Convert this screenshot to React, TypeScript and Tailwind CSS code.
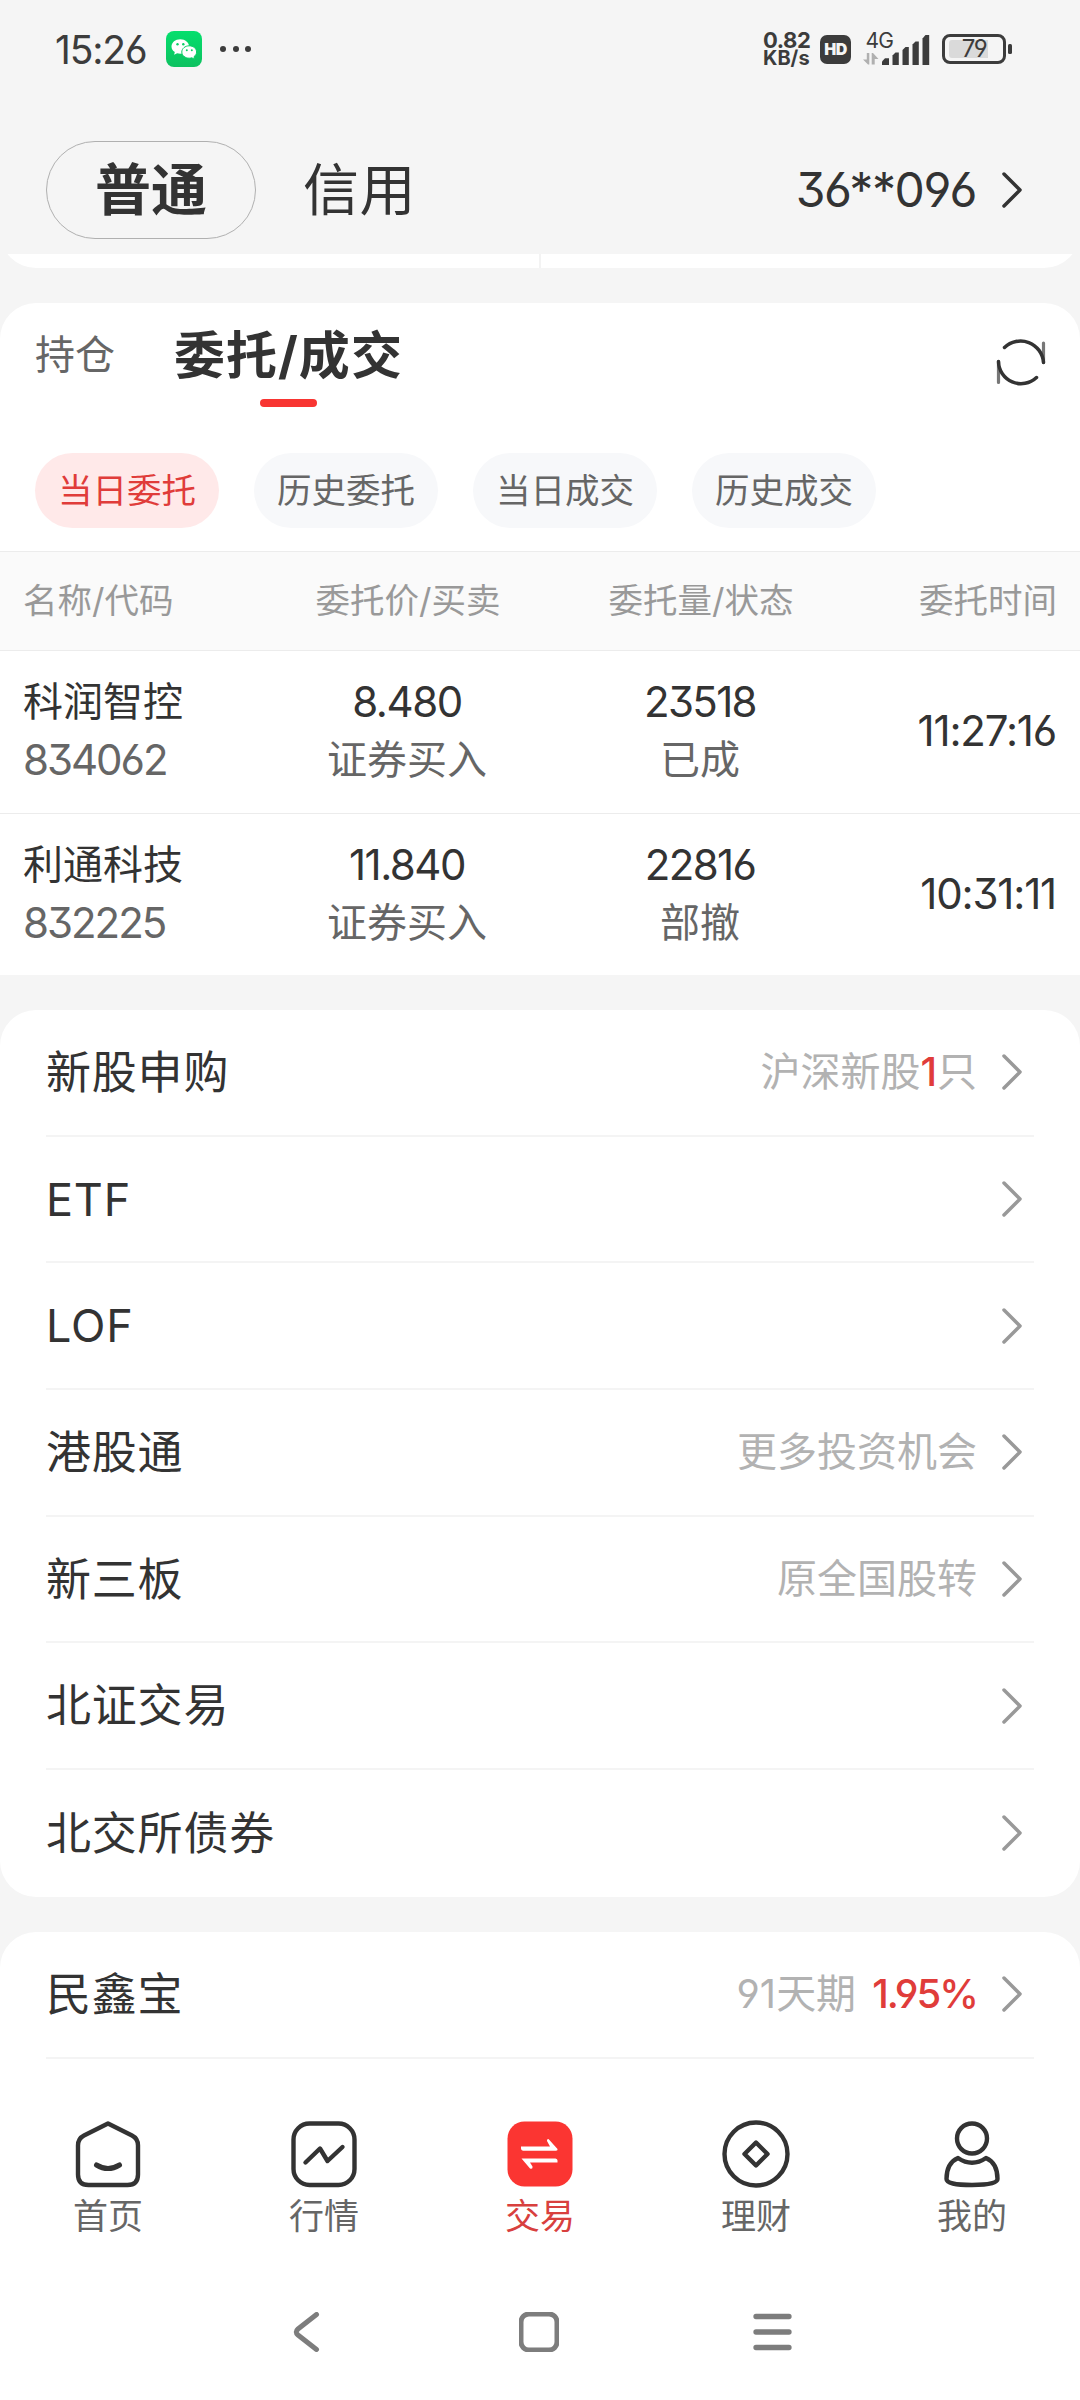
import type { ReactNode } from "react";

const FILTERS = ["当日委托", "历史委托", "当日成交", "历史成交"];

const ORDERS = [
  { name: "科润智控", code: "834062", price: "8.480", side: "证券买入", qty: "23518", status: "已成", time: "11:27:16" },
  { name: "利通科技", code: "832225", price: "11.840", side: "证券买入", qty: "22816", status: "部撤", time: "10:31:11" },
];

const ENTRIES: { label: string; note?: ReactNode }[] = [
  {
    label: "新股申购",
    note: (
      <>
        沪深新股<span className="font-medium text-[#e03c3a]">1</span>只
      </>
    ),
  },
  { label: "ETF" },
  { label: "LOF" },
  { label: "港股通", note: "更多投资机会" },
  { label: "新三板", note: "原全国股转" },
  { label: "北证交易" },
  { label: "北交所债券" },
];

export default function App() {
  return (
    <div className="flex h-[2400px] w-[1080px] flex-col overflow-hidden bg-[#f5f5f5] font-['Inter','Noto_Sans_CJK_SC',sans-serif] text-[#333] [font-feature-settings:'cv03','cv04','cv09']">
      <StatusBar />
      <AccountHeader />
      <PreviousCard />
      <Orders />

      <section className="mt-[35px] rounded-[36px] bg-white">
        {ENTRIES.map((e, i) => (
          <EntryRow key={e.label} label={e.label} last={i === ENTRIES.length - 1}>
            {e.note}
          </EntryRow>
        ))}
      </section>

      <section className="mt-[35px] flex-1 rounded-t-[36px] bg-white">
        <EntryRow label="民鑫宝">
          91天期<span className="ml-4 font-medium tracking-[-0.05em] text-[#e03c3a]">1.95%</span>
        </EntryRow>
      </section>

      <TabBar />
      <SystemNav />
    </div>
  );
}

function StatusBar() {
  return (
    <div className="flex h-[98px] shrink-0 items-center justify-between pr-[68px] pl-[55px] text-[#3c3c3c]">
      <div className="flex items-center">
        <span className="w-[111px] text-[39px] leading-none tracking-[-0.03em]">15:26</span>
        <svg viewBox="0 0 36 36" className="h-9 w-9">
          <defs>
            <linearGradient id="wx" x1="0" y1="0" x2="0" y2="1">
              <stop offset="0" stopColor="#05df6d" />
              <stop offset="1" stopColor="#0dc160" />
            </linearGradient>
          </defs>
          <rect width="36" height="36" rx="8" fill="url(#wx)" />
          <path d="M14.3 8.2c-5 0-8.8 3.2-8.8 7.3 0 2.3 1.3 4.3 3.3 5.6l-.7 2.6 3-1.5c1 .3 2.1.5 3.2.5 5 0 8.8-3.2 8.8-7.2s-3.9-7.3-8.8-7.3z" fill="#fff" />
          <path d="M23.2 14.8c4.1 0 7.4 2.8 7.4 6.2 0 1.9-1 3.5-2.6 4.7l.5 2.5-2.7-1.4c-.8.2-1.7.4-2.6.4-4.1 0-7.4-2.8-7.4-6.2s3.3-6.200 7.4-6.200z" fill="#fff" stroke="#08cf66" strokeWidth="1" />
          <g fill="#08cf66">
            <circle cx="11.5" cy="13.2" r="1.2" />
            <circle cx="17.3" cy="13.2" r="1.2" />
            <circle cx="20.8" cy="19.3" r="1" />
            <circle cx="25.8" cy="19.3" r="1" />
          </g>
        </svg>
        <div className="ml-[18px] flex gap-[6.5px]">
          <i className="size-1.5 rounded-full bg-current" />
          <i className="size-1.5 rounded-full bg-current" />
          <i className="size-1.5 rounded-full bg-current" />
        </div>
      </div>

      <div className="flex items-center">
        <div className="w-[57px] text-[22px] leading-[18px] font-bold">
          <div className="tracking-[-0.02em]">0.82</div>
          <div className="text-[20px]">KB/s</div>
        </div>
        <div className="flex h-[29px] w-[31px] items-center justify-center rounded-[7px] bg-[#3c3c3c] text-[16px] leading-none font-black tracking-[-0.03em] text-[#f5f5f5]">
          HD
        </div>
        <svg viewBox="0 0 68 34" className="ml-3 h-[34px] w-[68px] overflow-visible">
          <text x="2.5" y="15.5" fontSize="21" letterSpacing="-0.8" fill="#3c3c3c">
            4G
          </text>
          <path d="M0 27.500h3.800V21H6.300v11.500H5zM8.700 32.500V21H10l5.500 6h-3.800v5.500z" fill="#b0b0b0" />
          <g fill="#3c3c3c">
            <path d="M19 33v-3.500l3-3.200h4V33z" />
            <path d="M29.500 33v-9.500l3-3h3.300V33z" />
            <path d="M39.500 33V18l3-3h3.300v18z" />
            <path d="M49.500 33V12.500l3-3h3.300V33z" />
            <path d="M59.500 33V6.500l3-3.500h3.700v30z" />
          </g>
        </svg>
        <div className="ml-[11px] flex h-[30px] w-[64px] items-center rounded-[8px] border-[3px] border-current pl-1">
          <div className="flex h-[18px] w-[39px] items-center justify-end rounded-l-[3px] bg-[#dadada] pr-0.5 text-[24px] leading-none tracking-[-0.07em]">
            79
          </div>
        </div>
        <i className="ml-0.5 h-2.5 w-1 rounded-[1.5px] bg-current" />
      </div>
    </div>
  );
}

function AccountHeader() {
  return (
    <div className="flex h-[156px] shrink-0 items-center pt-[28px] pr-[58px] pl-[46px]">
      <div className="mt-[-1px] flex h-[98px] w-[210px] items-center justify-center rounded-full border border-[#b0b0b0] text-[56px] leading-none font-bold">
        普通
      </div>
      <span className="ml-[47px] text-[56px] leading-none tracking-[0.01em]">信用</span>
      <span className="ml-auto text-[48px] leading-none tracking-[-0.028em]">36**096</span>
      <Chevron className="ml-[26px] text-[#333]" />
    </div>
  );
}

// Only the bottom edge of the scrolled-away card is still visible.
function PreviousCard() {
  return (
    <div className="flex h-3.5 shrink-0 items-end overflow-hidden">
      <div className="flex h-20 w-full shrink-0 justify-center rounded-b-[36px] bg-white">
        <i className="w-0.5 bg-[#f3f3f3]" />
      </div>
    </div>
  );
}

function Orders() {
  return (
    <section className="mt-[35px] rounded-t-[36px] bg-white">
      <div className="flex h-[150px] items-start pr-[34px] pl-[35px]">
        <span className="mt-[31px] text-[40px] leading-[42px] text-[#666]">持仓</span>
        <div className="ml-[59px] flex flex-col items-center">
          <span className="mt-[23px] text-[51px] leading-[60px] font-bold tracking-[0.02em]">委托/成交</span>
          <i className="mt-[13px] h-2 w-[57px] rounded-full bg-[#f83532]" />
        </div>
        <svg viewBox="0 0 50 50" className="mt-[34px] ml-auto h-[50px] w-[50px]" fill="none" strokeLinecap="round">
          <path d="M47.500 6v19.500M2.500 24.500v21" stroke="#777" strokeWidth="3.200" />
          <path d="M8.500 10.500A23 23 0 0 1 47.500 25.500M40.500 40.500A22.500 22.500 0 0 1 2.500 24.500" stroke="#333" strokeWidth="3.500" />
        </svg>
      </div>

      <div className="flex h-[98px] gap-[35px] pl-[35px]">
        {FILTERS.map((f, i) => (
          <span
            key={f}
            className={`flex h-[75px] w-[184px] items-center justify-center rounded-full pt-px text-[34.5px] leading-none ${
              i === 0 ? "bg-[#ffe9e9] text-[#e03c3a]" : "bg-[#f7f8fa] text-[#666]"
            }`}
          >
            {f}
          </span>
        ))}
      </div>

      <div className="grid h-[100px] grid-cols-[262px_292px_294px_232px] items-center border-y border-[#ececec] bg-[#fafafa] text-[34.5px] leading-none text-[#999]">
        <span className="pl-[23px]">名称/代码</span>
        <span className="text-center">委托价/买卖</span>
        <span className="text-center">委托量/状态</span>
        <span className="pr-[23px] text-right">委托时间</span>
      </div>

      {ORDERS.map((o) => (
        <div
          key={o.code}
          className="grid h-[163px] grid-cols-[262px_290px_296px_232px] border-b border-[#ececec] pt-[22px] text-[40px] leading-[58px] last:h-[161px] last:border-b-0"
        >
          <div className="pl-[23px]">
            <div>{o.name}</div>
            <div className="text-[42px] tracking-[-0.048em] text-[#666]">{o.code}</div>
          </div>
          <div className="text-center">
            <div className="text-[42px] tracking-[-0.035em]">{o.price}</div>
            <div className="text-[#666]">{o.side}</div>
          </div>
          <div className="text-center">
            <div className="text-[42px] tracking-[-0.04em]">{o.qty}</div>
            <div className="text-[#666]">{o.status}</div>
          </div>
          <div className="pt-[29px] pr-6 text-right text-[42px] tracking-[-0.028em]">{o.time}</div>
        </div>
      ))}
    </section>
  );
}

function EntryRow({ label, last, children }: { label: string; last?: boolean; children?: ReactNode }) {
  return (
    <div className={`mx-[46px] flex h-[126.7px] items-center border-[#f4f4f4] pr-3 ${last ? "" : "border-b-2"}`}>
      <span className="text-[45px] leading-none tracking-[0.018em]">{label}</span>
      <span className="ml-auto text-[40px] leading-none text-[#b2b2b2]">{children}</span>
      <Chevron className="ml-[25px] text-[#999]" />
    </div>
  );
}

function Chevron({ className }: { className: string }) {
  return (
    <svg viewBox="0 0 20 36" className={`h-9 w-5 ${className}`} fill="none" stroke="currentColor" strokeWidth="3.5" strokeLinecap="round" strokeLinejoin="round">
      <path d="M2 2l16 16L2 34" />
    </svg>
  );
}

const TABS: { label: string; icon: ReactNode }[] = [
  {
    label: "首页",
    icon: (
      <>
        <path d="M34 3.500 58 15.500q6 3 6 10V54.500q0 10.500-10.500 10.500h-39Q4 65 4 54.500V25.500q0-7 6-10z" />
        <path d="M22.500 45q11.500 7 23 0" strokeWidth="5" />
      </>
    ),
  },
  {
    label: "行情",
    icon: (
      <>
        <rect x="3.5" y="3.5" width="61" height="61.500" rx="16" />
        <path d="M15.500 42.500 30 28.500l7.500 12.500L52.500 27" />
      </>
    ),
  },
  {
    label: "交易",
    icon: (
      <>
        <rect x="1.5" y="1.5" width="65" height="65" rx="17" fill="#fb3532" stroke="none" />
        <path d="M15 26.500h29L41 21q-.5-2 1.500-2l9 10q.5 1.800-1.500 1.800H17q-2-.3-2-2.300z" fill="#fff" stroke="none" />
        <path d="M51.500 42.500H24l2.500 4q.5 3-2.500 2L15.500 38.500h34q2 .3 2 2z" fill="#fff" stroke="none" />
      </>
    ),
  },
  {
    label: "理财",
    icon: (
      <>
        <circle cx="34" cy="34" r="31.500" />
        <path d="M34 22.500 45.500 34 34 45.500 22.500 34z" />
      </>
    ),
  },
  {
    label: "我的",
    icon: (
      <>
        <circle cx="34" cy="18.500" r="15" />
        <path d="M20 38q14 9.500 28 0c8 3.500 11.500 12 11.500 21q0 6-25.500 6T8.500 59c0-9 3.500-17.500 11.500-21z" />
      </>
    ),
  },
];

function TabBar() {
  return (
    <nav className="flex h-[200px] shrink-0 bg-white pt-[56px]">
      {TABS.map((t) => (
        <div key={t.label} className="flex flex-1 flex-col items-center">
          <svg viewBox="0 0 68 68" className="h-[68px] w-[68px]" fill="none" stroke="#333" strokeWidth="4.4" strokeLinecap="round" strokeLinejoin="round">
            {t.icon}
          </svg>
          <span className={`mt-2.5 text-[35px] leading-[36px] ${t.label === "交易" ? "text-[#d8403e]" : "text-[#666]"}`}>
            {t.label}
          </span>
        </div>
      ))}
    </nav>
  );
}

function SystemNav() {
  return (
    <div className="flex h-[136px] shrink-0 items-start justify-between bg-white pt-12 pr-[288px] pl-[286px]">
      <svg viewBox="0 0 40 40" className="size-10" fill="none" stroke="#7d7d7d" strokeWidth="5" strokeLinecap="round">
        <path d="M30.500 2.500 12 17q-3.500 3 0 6l18.500 14.500" />
      </svg>
      <svg viewBox="0 0 40 40" className="size-10" fill="none" stroke="#7d7d7d" strokeWidth="5">
        <rect x="2" y="2" width="36" height="36" rx="8" />
      </svg>
      <svg viewBox="0 0 40 40" className="size-10" fill="none" stroke="#7d7d7d" strokeWidth="5.3" strokeLinecap="round">
        <path d="M4 4.500h33M4 20h33M4 35.500h33" />
      </svg>
    </div>
  );
}
